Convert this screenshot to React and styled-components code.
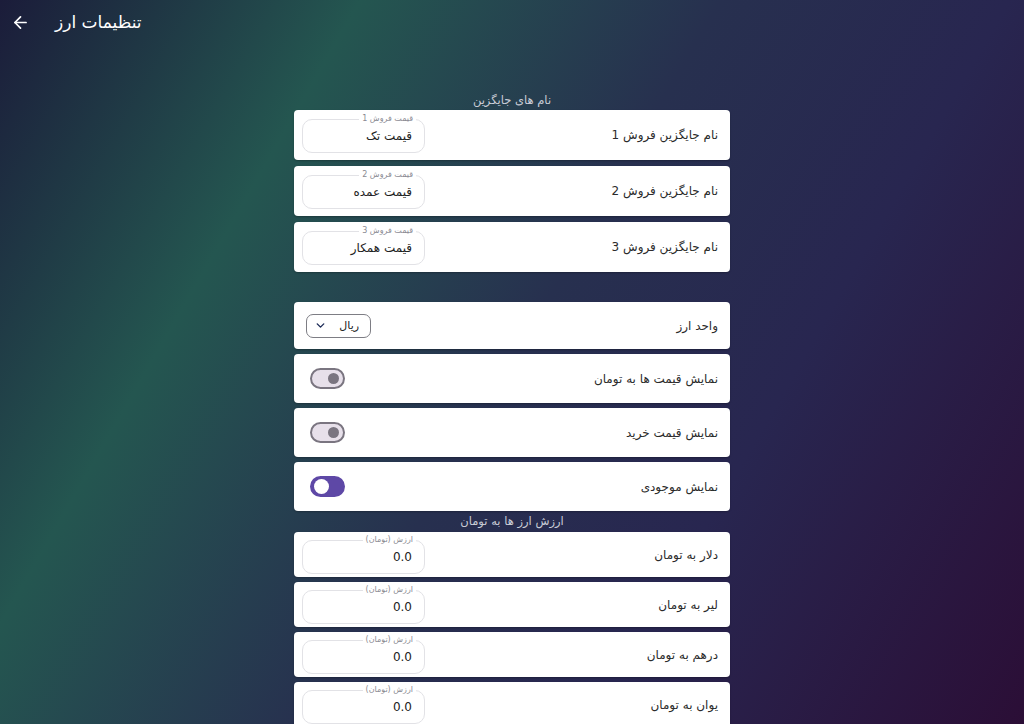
import React, { useState } from 'react';
import styled, { createGlobalStyle } from 'styled-components';
import { ArrowLeft, ChevronDown } from 'lucide-react';

const GlobalStyle = createGlobalStyle`
    html, body {
        margin: 0;
        padding: 0;
        height: 100%;
    }
    body {
        font-family: "DejaVu Sans", "Noto Sans", sans-serif;
        overflow: hidden;
    }
`;

const Page = styled.div`
    width: 1024px;
    height: 724px;
    overflow: hidden;
    background: linear-gradient(120deg, #1b1c3a 0%, #245650 25%, #27304f 50%, #282650 70%, #2b0e36 100%);
    display: flex;
    flex-direction: column;
`;

const AppBar = styled.div`
    height: 44px;
    display: flex;
    align-items: center;
    padding-left: 11px;
    gap: 25px;
    color: #fff;
    flex-shrink: 0;
`;

const BackButton = styled.button`
    background: none;
    border: none;
    padding: 0;
    color: #fff;
    display: flex;
    cursor: pointer;
`;

const Title = styled.h1`
    margin: 0;
    font-size: 17px;
    font-weight: normal;
    direction: rtl;
`;

const Content = styled.div`
    width: 436px;
    margin: 46px auto 0;
    display: flex;
    flex-direction: column;
`;

const SectionTitle = styled.div`
    text-align: center;
    direction: rtl;
    color: #c9ccd6;
    font-size: 11.5px;
    line-height: ${p => p.lh || 20}px;
`;

const Group = styled.div`
    display: flex;
    flex-direction: column;
    gap: ${p => p.gap}px;
    margin-top: ${p => p.top || 0}px;
`;

const Card = styled.div`
    direction: rtl;
    height: ${p => p.h}px;
    background: #fff;
    border-radius: 4px;
    display: flex;
    align-items: center;
    justify-content: space-between;
    padding: 0 12px 0 8px;
    box-shadow: 0 1px 2px rgba(0, 0, 0, 0.25);
    box-sizing: border-box;
`;

const Label = styled.span`
    font-size: 12px;
    color: #2b2b2b;
`;

const Field = styled.div`
    position: relative;
    width: 123px;
    height: 34px;
    border: 1px solid #e2e2e6;
    border-radius: 10px;
    box-sizing: border-box;
    display: flex;
    align-items: center;
    padding: 0 12px;
    margin-top: ${p => p.top || 0}px;
`;

const FieldLabel = styled.span`
    position: absolute;
    top: -7px;
    right: 8px;
    padding: 0 3px;
    background: #fff;
    font-size: 8px;
    line-height: 12px;
    color: #8a8a92;
`;

const FieldValue = styled.span`
    font-size: 12px;
    color: #222;
    direction: ${p => (p.ltr ? 'ltr' : 'rtl')};
    margin-left: auto;
`;

const Select = styled.div`
    width: 65px;
    height: 24px;
    border: 1px solid #7d7d84;
    border-radius: 7px;
    box-sizing: border-box;
    display: flex;
    align-items: center;
    justify-content: space-between;
    padding: 0 11px 0 7px;
    margin-left: 4px;
    font-size: 11px;
    color: #222;
`;

const Track = styled.button`
    direction: ltr;
    width: 35px;
    height: 21px;
    border-radius: 11px;
    box-sizing: border-box;
    padding: 0 3px;
    margin-left: 8px;
    display: flex;
    align-items: center;
    justify-content: ${p => (p.on ? 'flex-start' : 'flex-end')};
    background: ${p => (p.on ? '#5e48a6' : '#e7e0ea')};
    border: 2px solid ${p => (p.on ? '#5e48a6' : '#7a7580')};
    cursor: pointer;
`;

const Thumb = styled.span`
    width: ${p => (p.on ? 15 : 11)}px;
    height: ${p => (p.on ? 15 : 11)}px;
    border-radius: 50%;
    background: ${p => (p.on ? '#fff' : '#7a7580')};
    margin: ${p => (p.on ? '0 0 0 -1px' : '0 1px 0 0')};
`;

const Switch = ({ on, onToggle }) => (
    <Track on={on ? 1 : 0} onClick={onToggle}>
        <Thumb on={on ? 1 : 0} />
    </Track>
);

const names = [
    { label: 'نام جایگزین فروش 1', hint: 'قیمت فروش 1', value: 'قیمت تک' },
    { label: 'نام جایگزین فروش 2', hint: 'قیمت فروش 2', value: 'قیمت عمده' },
    { label: 'نام جایگزین فروش 3', hint: 'قیمت فروش 3', value: 'قیمت همکار' },
];

const rates = ['دلار به تومان', 'لیر به تومان', 'درهم به تومان', 'یوان به تومان'];

export default function App() {
    const [toggles, setToggles] = useState({ toman: false, buy: false, stock: true });
    const flip = key => setToggles(t => ({ ...t, [key]: !t[key] }));

    return (
        <Page>
            <GlobalStyle />
            <AppBar>
                <BackButton>
                    <ArrowLeft size={19} strokeWidth={2.2} />
                </BackButton>
                <Title>تنظیمات ارز</Title>
            </AppBar>
            <Content>
                <SectionTitle>نام های جایگزین</SectionTitle>
                <Group gap={6}>
                    {names.map(n => (
                        <Card h={50} key={n.label}>
                            <Label>{n.label}</Label>
                            <Field top={2}>
                                <FieldLabel>{n.hint}</FieldLabel>
                                <FieldValue>{n.value}</FieldValue>
                            </Field>
                        </Card>
                    ))}
                </Group>
                <Group gap={5} top={30}>
                    <Card h={47}>
                        <Label>واحد ارز</Label>
                        <Select>
                            <span>ریال</span>
                            <ChevronDown size={13} strokeWidth={2.6} color="#1d2b57" />
                        </Select>
                    </Card>
                    <Card h={49}>
                        <Label>نمایش قیمت ها به تومان</Label>
                        <Switch on={toggles.toman} onToggle={() => flip('toman')} />
                    </Card>
                    <Card h={49}>
                        <Label>نمایش قیمت خرید</Label>
                        <Switch on={toggles.buy} onToggle={() => flip('buy')} />
                    </Card>
                    <Card h={49}>
                        <Label>نمایش موجودی</Label>
                        <Switch on={toggles.stock} onToggle={() => flip('stock')} />
                    </Card>
                </Group>
                <SectionTitle lh={21}>ارزش ارز ها به تومان</SectionTitle>
                <Group gap={5}>
                    {rates.map(r => (
                        <Card h={45} key={r}>
                            <Label>{r}</Label>
                            <Field top={4}>
                                <FieldLabel>ارزش (تومان)</FieldLabel>
                                <FieldValue ltr>0.0</FieldValue>
                            </Field>
                        </Card>
                    ))}
                </Group>
            </Content>
        </Page>
    );
}
